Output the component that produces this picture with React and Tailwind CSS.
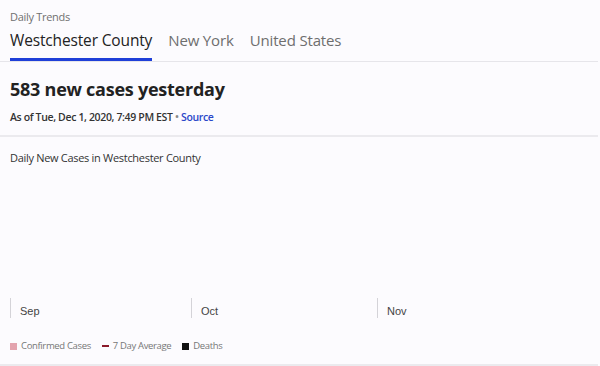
import React from "react";

const tabs = ["Westchester County", "New York", "United States"];

const months = [
  { label: "Sep", width: "w-[181px]" },
  { label: "Oct", width: "w-[186px]" },
  { label: "Nov", width: "flex-1" },
];

const DailyTrends = () => {
  return (
    <div className="w-[600px] h-[366px] bg-[#fcfbfe] overflow-hidden" style={{ fontFamily: '"Open Sans", "Noto Sans", sans-serif' }}>
      <div className="pr-[2px]">
        <div className="px-[10px] pt-[9px] text-[11px] leading-[16px] tracking-[-0.3px] text-[#707070]">Daily Trends</div>

        {/* tabs */}
        <div className="flex px-[10px] mt-[4px] gap-[16px] border-b border-[#e6e5ea]">
          {tabs.map((t, i) => (
            <div
              key={t}
              className={`pb-[7px] leading-[22px] tracking-[-0.15px] border-b-[3px] ${
                i === 0 ? "text-[15.5px] text-[#222] border-[#1f3fd8] font-medium" : "text-[15px] text-[#6e6e6e] border-transparent"
              }`}
            >
              {t}
            </div>
          ))}
        </div>

        <div className="px-[10px] pt-[14px]">
          <h1 className="text-[18px] leading-[26px] tracking-[-0.25px] font-bold text-[#222]">583 new cases yesterday</h1>
          <div className="mt-[8px] text-[10.5px] leading-[14px] tracking-[-0.35px] font-semibold text-[#333]">
            As of Tue, Dec 1, 2020, 7:49 PM EST <span className="text-[#888]">•</span>{" "}
            <span className="text-[#2b47c9]">Source</span>
          </div>
        </div>
        <div className="mt-[11px] h-[2px] bg-[#ebeaee]" />

        <div className="px-[10px] pt-[13px] text-[11px] leading-[16px] tracking-[-0.3px] text-[#333]">Daily New Cases in Westchester County</div>

        {/* chart area */}
        <div className="h-[132px]" />
        <div className="flex pl-[10px]" style={{ fontFamily: '"Liberation Sans", Arial, sans-serif' }}>
          {months.map((m) => (
            <div key={m.label} className={`${m.width} h-[20px] border-l border-[#d4d3d8] pl-[9px] pt-[7px] text-[11px] leading-[13px] text-[#444]`}>
              {m.label}
            </div>
          ))}
        </div>

        {/* legend */}
        <div className="flex items-center px-[10px] mt-[21px] gap-[11px] text-[9.5px] leading-[14px] tracking-[-0.35px] text-[#777]">
          <div className="flex items-center gap-[4px]">
            <span className="w-[7px] h-[7px] bg-[#e3a3ae]" />
            Confirmed Cases
          </div>
          <div className="flex items-center gap-[4px]">
            <span className="w-[7px] h-[2px] bg-[#8b1a2a]" />
            7 Day Average
          </div>
          <div className="flex items-center gap-[4px]">
            <span className="w-[7px] h-[7px] bg-[#111]" />
            Deaths
          </div>
        </div>
        <div className="mt-[11px] h-[2px] bg-[#ebeaee]" />
      </div>
    </div>
  );
};

export default function App() {
  return <DailyTrends />;
}
